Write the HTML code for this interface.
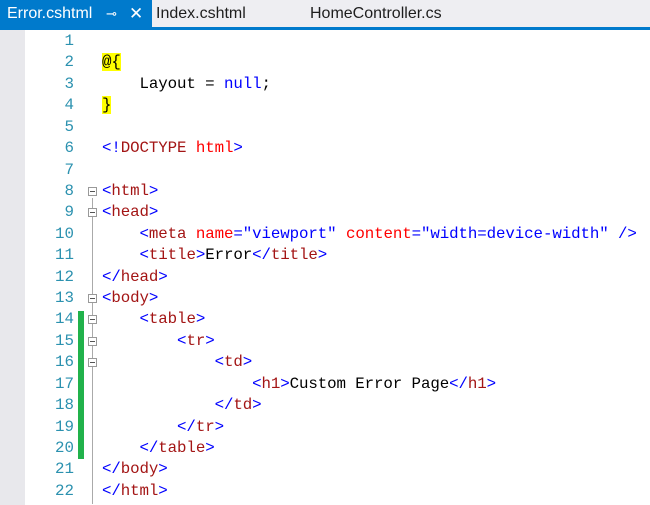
<!DOCTYPE html>
<html><head><style>
body{margin:0;width:650px;height:505px;overflow:hidden;background:#fff;font-family:"Liberation Sans",sans-serif;position:relative}
.tabs{position:absolute;left:0;top:0;width:650px;height:27px;background:#eeeef2;border-bottom:3px solid #007acc}
.tab{position:absolute;top:0;height:27px;line-height:28px;font-size:16px;color:#1e1e1e;white-space:nowrap}
.act{left:0;width:152px;background:#007acc;color:#fff;padding-left:7px;box-sizing:border-box;overflow:hidden}
.gut{position:absolute;left:0;top:30px;width:25px;height:475px;background:#e8e8ec}
.code{position:absolute;left:0;top:31px;font-family:"Liberation Mono",monospace;font-size:15.8px;}
.l{height:21.43px;line-height:21.43px;white-space:pre;position:relative}
.n{position:absolute;left:30px;width:44px;text-align:right;color:#2b91af}
.t{position:absolute;left:102px;color:#000;letter-spacing:-0.1px}
.b{color:#0000ff}.k{color:#a31515}.a{color:#ff0000}
.y{background:#ffff00}
.fold{position:absolute;left:88px;width:9px;height:9px;border:1px solid #999;box-sizing:border-box;background:#fff}
.fold:after{content:"";position:absolute;left:1px;right:1px;top:3px;height:1px;background:#555}
.vl{position:absolute;left:92px;width:1px;background:#aaa}
.green{position:absolute;left:78px;top:311px;width:6px;height:148px;background:#21b24b}
</style></head><body>
<div class="tabs">
<div class="tab act">Error.cshtml
<span style="position:absolute;left:106px;top:0;font-size:13px">⊸</span>
<span style="position:absolute;left:129px;top:0;font-size:17px">✕</span></div>
<div class="tab" style="left:156px">Index.cshtml</div>
<div class="tab" style="left:310px">HomeController.cs</div>
</div>
<div class="gut"></div>
<div class="green"></div>
<div class="vl" style="top:198px;height:86px"></div>
<div class="vl" style="top:284px;height:220px"></div>
<div class="code">
<div class="l"><span class="n">1</span></div>
<div class="l"><span class="n">2</span><span class="t"><span class="y">@{</span></span></div>
<div class="l"><span class="n">3</span><span class="t">    Layout = <span class="b">null</span>;</span></div>
<div class="l"><span class="n">4</span><span class="t"><span class="y">}</span></span></div>
<div class="l"><span class="n">5</span></div>
<div class="l"><span class="n">6</span><span class="t"><span class="b">&lt;!</span><span class="k">DOCTYPE</span> <span class="a">html</span><span class="b">&gt;</span></span></div>
<div class="l"><span class="n">7</span></div>
<div class="l"><span class="n">8</span><span class="fold" style="top:6px"></span><span class="t"><span class="b">&lt;</span><span class="k">html</span><span class="b">&gt;</span></span></div>
<div class="l"><span class="n">9</span><span class="fold" style="top:6px"></span><span class="t"><span class="b">&lt;</span><span class="k">head</span><span class="b">&gt;</span></span></div>
<div class="l"><span class="n">10</span><span class="t">    <span class="b">&lt;</span><span class="k">meta</span> <span class="a">name</span><span class="b">="viewport"</span> <span class="a">content</span><span class="b">="width=device-width"</span> <span class="b">/&gt;</span></span></div>
<div class="l"><span class="n">11</span><span class="t">    <span class="b">&lt;</span><span class="k">title</span><span class="b">&gt;</span>Error<span class="b">&lt;/</span><span class="k">title</span><span class="b">&gt;</span></span></div>
<div class="l"><span class="n">12</span><span class="t"><span class="b">&lt;/</span><span class="k">head</span><span class="b">&gt;</span></span></div>
<div class="l"><span class="n">13</span><span class="fold" style="top:6px"></span><span class="t"><span class="b">&lt;</span><span class="k">body</span><span class="b">&gt;</span></span></div>
<div class="l"><span class="n">14</span><span class="fold" style="top:6px"></span><span class="t">    <span class="b">&lt;</span><span class="k">table</span><span class="b">&gt;</span></span></div>
<div class="l"><span class="n">15</span><span class="fold" style="top:6px"></span><span class="t">        <span class="b">&lt;</span><span class="k">tr</span><span class="b">&gt;</span></span></div>
<div class="l"><span class="n">16</span><span class="fold" style="top:6px"></span><span class="t">            <span class="b">&lt;</span><span class="k">td</span><span class="b">&gt;</span></span></div>
<div class="l"><span class="n">17</span><span class="t">                <span class="b">&lt;</span><span class="k">h1</span><span class="b">&gt;</span>Custom Error Page<span class="b">&lt;/</span><span class="k">h1</span><span class="b">&gt;</span></span></div>
<div class="l"><span class="n">18</span><span class="t">            <span class="b">&lt;/</span><span class="k">td</span><span class="b">&gt;</span></span></div>
<div class="l"><span class="n">19</span><span class="t">        <span class="b">&lt;/</span><span class="k">tr</span><span class="b">&gt;</span></span></div>
<div class="l"><span class="n">20</span><span class="t">    <span class="b">&lt;/</span><span class="k">table</span><span class="b">&gt;</span></span></div>
<div class="l"><span class="n">21</span><span class="t"><span class="b">&lt;/</span><span class="k">body</span><span class="b">&gt;</span></span></div>
<div class="l"><span class="n">22</span><span class="t"><span class="b">&lt;/</span><span class="k">html</span><span class="b">&gt;</span></span></div>
</div>
</body></html>
